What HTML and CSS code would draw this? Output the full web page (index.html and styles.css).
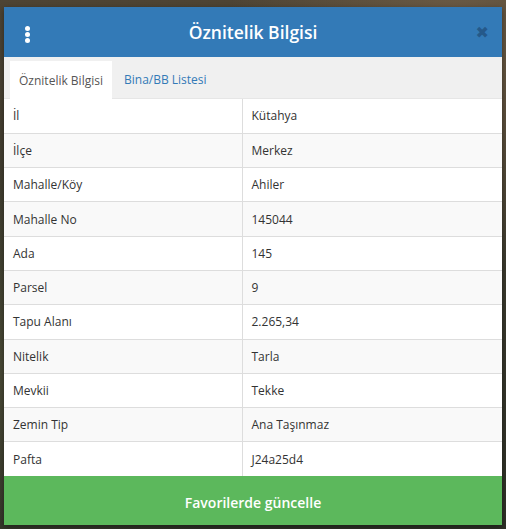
FILE: index.html
```html
<!DOCTYPE html>
<html lang="tr">
<head>
<meta charset="utf-8">
<link rel="stylesheet" href="styles.css">
</head>
<body>
<div class="panel">
  <div class="header">
    <span class="kebab"><i></i><i></i><i></i></span>
    <h1 class="title">Öznitelik Bilgisi</h1>
    <span class="close">&#x2716;</span>
  </div>
  <div class="tabs">
    <div class="tab active">Öznitelik Bilgisi</div>
    <div class="tab link">Bina/BB Listesi</div>
  </div>
  <table class="attrs">
    <tr><td>İl</td><td>Kütahya</td></tr>
    <tr><td>İlçe</td><td>Merkez</td></tr>
    <tr><td>Mahalle/Köy</td><td>Ahiler</td></tr>
    <tr><td>Mahalle No</td><td>145044</td></tr>
    <tr><td>Ada</td><td>145</td></tr>
    <tr><td>Parsel</td><td>9</td></tr>
    <tr><td>Tapu Alanı</td><td>2.265,34</td></tr>
    <tr><td>Nitelik</td><td>Tarla</td></tr>
    <tr><td>Mevkii</td><td>Tekke</td></tr>
    <tr><td>Zemin Tip</td><td>Ana Taşınmaz</td></tr>
    <tr><td>Pafta</td><td>J24a25d4</td></tr>
  </table>
  <button class="fav">Favorilerde güncelle</button>
</div>
</body>
</html>
```
FILE: styles.css
```css
html, body {
  margin: 0;
  padding: 0;
  height: 100%;
}
body {
  font-family: "Open Sans", "Noto Sans", sans-serif;
  background:
    radial-gradient(ellipse at 90% 5%, #6b5a44 0%, rgba(107,90,68,0) 35%),
    radial-gradient(ellipse at 5% 70%, #4a4a36 0%, rgba(74,74,54,0) 40%),
    linear-gradient(180deg, #4e4434 0%, #3b3a2e 50%, #2e3027 100%);
  overflow: hidden;
}
.panel {
  margin: 7px 4px 0 4px;
  width: 498px;
  background: #fff;
  display: flex;
  flex-direction: column;
  box-shadow: 0 2px 6px rgba(0,0,0,0.4);
}
.header {
  height: 50px;
  background: #337ab7;
  display: flex;
  align-items: center;
  justify-content: center;
  position: relative;
}
.title {
  margin: 0;
  color: #fff;
  font-size: 17.5px;
  font-weight: 600;
}
.kebab {
  position: absolute;
  left: 21px;
  top: 19px;
  display: flex;
  flex-direction: column;
  gap: 1px;
}
.kebab i {
  display: block;
  width: 5px;
  height: 5px;
  border-radius: 50%;
  background: #fff;
}
.close {
  position: absolute;
  right: 13px;
  top: 16px;
  color: #25598a;
  font-size: 16px;
  font-family: "DejaVu Sans", sans-serif;
}
.tabs {
  background: #f0f0f0;
  height: 42px;
  padding: 4px 0 0 6px;
  box-sizing: border-box;
  display: flex;
  align-items: stretch;
  border-bottom: 1px solid #e6e6e6;
}
.tab {
  font-size: 12px;
  padding: 0 8px;
  display: flex;
  align-items: center;
  color: #555;
}
.tab.active {
  background: #fff;
  width: 102px;
  box-sizing: border-box;
  justify-content: center;
  padding: 0;
  margin-bottom: -1px;
}
.tab.link {
  color: #337ab7;
  padding-left: 12px;
}
.attrs {
  width: 100%;
  border-collapse: collapse;
  font-size: 12px;
  color: #333;
}
.attrs td {
  height: 34.3px;
  box-sizing: border-box;
  padding: 0 9px;
  border-top: 1px solid #ddd;
  vertical-align: middle;
}
.attrs tr:first-child td {
  border-top: none;
}
.attrs td:first-child {
  width: 238px;
  border-right: 1px solid #ddd;
}
.attrs tr:nth-child(even) td {
  background: #f9f9f9;
}
.fav {
  height: 49px;
  border: none;
  margin: 0;
  padding: 4px 0 0 0;
  background: #5cb85c;
  color: #fff;
  font-family: "Open Sans", "Noto Sans", sans-serif;
  font-size: 14px;
  font-weight: 600;
  width: 100%;
  cursor: pointer;
}
```
